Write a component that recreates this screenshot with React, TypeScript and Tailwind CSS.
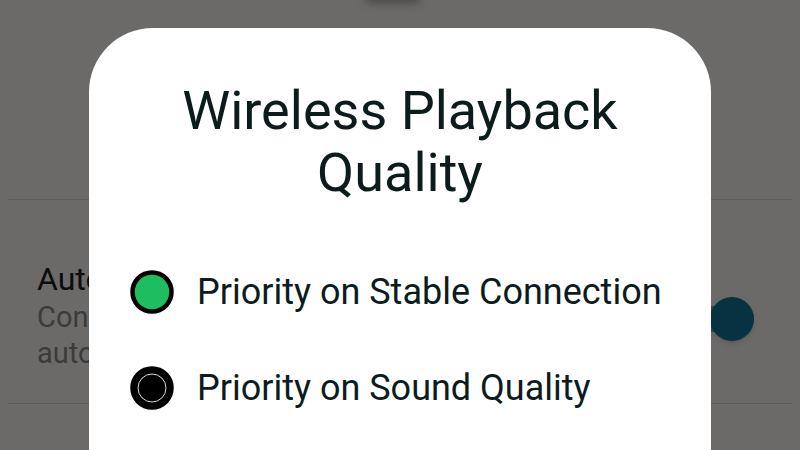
import { useState } from "react";

const options = [
  { id: "stable", label: "Priority on Stable Connection" },
  { id: "sound", label: "Priority on Sound Quality" },
];

const Radio = ({ checked }: { checked: boolean }) => (
  <svg width="44" height="44" viewBox="0 0 44 44" className="shrink-0">
    {checked ? (
      <circle cx="22" cy="22" r="19.5" fill="#1ebd5f" stroke="#000" strokeWidth="4.5" />
    ) : (
      <>
        <circle cx="22" cy="22" r="19.5" fill="#000" stroke="#000" strokeWidth="4.5" />
        <circle cx="22" cy="22" r="14" fill="none" stroke="#d8d8d8" strokeWidth="1" />
      </>
    )}
  </svg>
);

const App = () => {
  const [selected, setSelected] = useState("stable");

  return (
    <div
      className="relative w-[800px] h-[450px] overflow-hidden bg-[#6b6a69]"
      style={{ fontFamily: "Roboto, 'Noto Sans', sans-serif" }}
    >
      {/* Settings page behind the dim */}
      <div className="h-[199px] flex justify-center">
        <div className="w-[56px] h-[10px] -mt-[7px] -ml-[14px] rounded-full bg-[#484746] blur-[4px]" />
      </div>
      <div className="mx-2 border-t border-[#5d5c5b]" />
      <div className="h-[203px] flex justify-between pl-[37px] pr-[46px] pt-[59px]">
        {/* only the start of this text shows left of the dialog */}
        <div className="w-[52px] overflow-hidden whitespace-nowrap">
          <p className="text-[32px] leading-[40px] text-[#0c0c0c]">Auto Connect</p>
          <p className="text-[29px] leading-[36px] text-[#3b3b3b]">
            Connect to the device
            <br />
            automatically when turned on
          </p>
        </div>
        <div className="relative mt-[38px] w-[70px] h-[44px] flex items-center">
          <div className="w-full h-[26px] rounded-full bg-[#2c4a52]" />
          <div className="absolute right-0 top-0 w-[44px] h-[44px] rounded-full bg-[#063241] shadow-md" />
        </div>
      </div>
      <div className="mx-2 border-t border-[#5d5c5b]" />

      {/* Dialog */}
      <div className="absolute left-[89px] top-[28px] w-[622px] h-[460px] bg-white rounded-t-[64px] pt-[52px]">
        <h2 className="text-center text-[54px] leading-[62px] text-[#0c1c1d] px-10">
          Wireless Playback Quality
        </h2>
        <div className="mt-[40px] flex flex-col">
          {options.map((o) => (
            <button
              key={o.id}
              onClick={() => setSelected(o.id)}
              className="h-[96px] flex items-center gap-[23px] pl-[41px] text-left"
            >
              <Radio checked={selected === o.id} />
              <span className="text-[36px] text-[#0c1c1d]">{o.label}</span>
            </button>
          ))}
        </div>
      </div>
    </div>
  );
};

export default App;
